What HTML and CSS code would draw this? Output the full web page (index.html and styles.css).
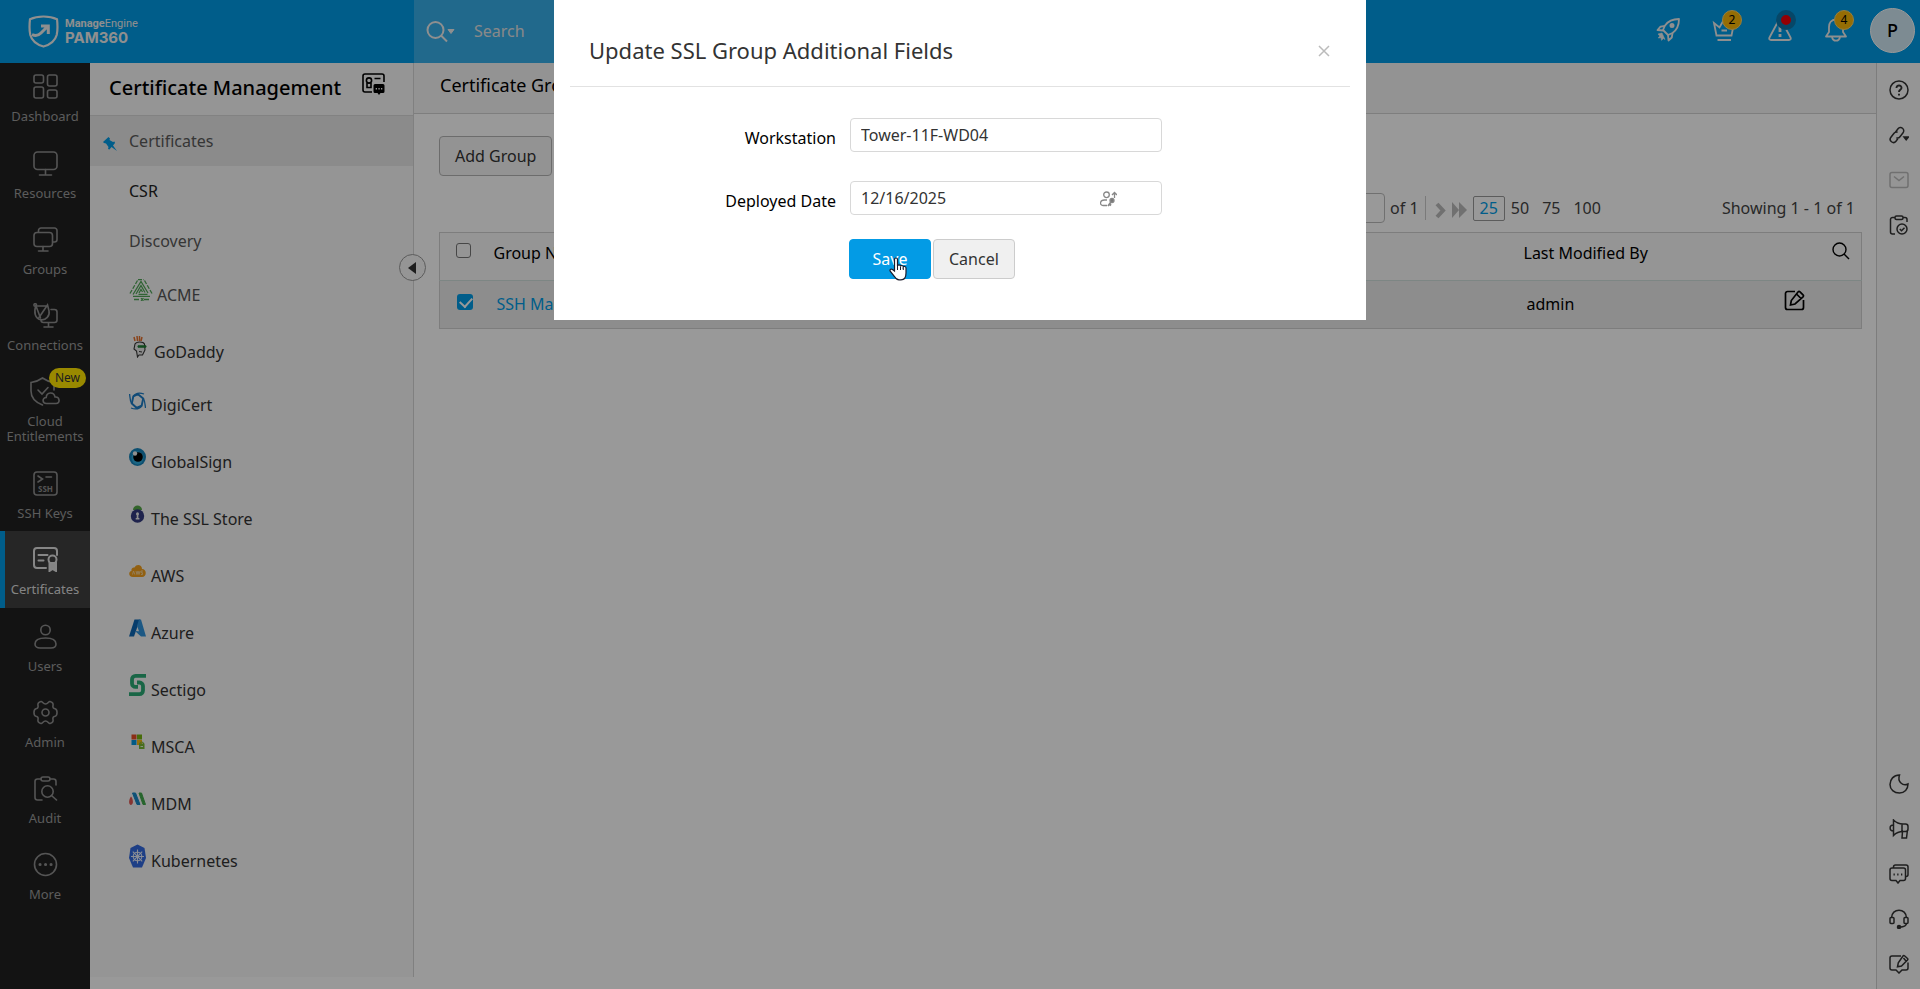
FILE: index.html
```html
<!DOCTYPE html>
<html lang="en">
<head>
<meta charset="utf-8">
<title>PAM360 - Certificate Groups</title>
<link rel="stylesheet" href="styles.css">
</head>
<body>
<div class="app">
  <header class="topbar">
    <a href="#" class="brand">
      <svg class="brand-mark" viewBox="0 0 31 33" fill="none" stroke="currentColor" stroke-width="2.2"><path d="M15.500 1.500C11 1.500 6 2.300 2 4.200c-.7 6-.8 10.800.3 15.800C3.800 25.500 8.500 29.600 15.500 31.500c7-1.900 11.700-6 13.200-11.500 1.100-5 1-9.800.3-15.800C25 2.300 20 1.500 15.500 1.500z"/><path d="M4 19.500c3.500 1.800 6.200 1.300 9-1.500l6.500-6.500M13 11h7.300v8" stroke-width="3"/></svg>
      <span class="brand-text"><span class="brand-top"><b>Manage</b>Engine</span><span class="brand-name">PAM360</span></span>
    </a>
    <div class="search">
      <button class="search-scope" aria-label="Search scope">
        <svg width="29" height="22" viewBox="0 0 29 22" fill="none" stroke="currentColor" stroke-width="2"><circle cx="9.500" cy="9" r="8"/><path d="M15 14.500l6 6"/><path d="M22 8.500h6l-3 4z" fill="currentColor" stroke-width="1"/></svg>
      </button>
      <input class="search-input" type="text" placeholder="Search" aria-label="Search">
    </div>
    <div class="top-actions">
      <button class="top-btn" aria-label="Quick start"><svg width="24" height="24" viewBox="0 0 24 24" fill="none" stroke="currentColor" stroke-width="1.800" stroke-linejoin="round"><path d="M23 1c-6 0-10.500 1.500-14 6.500L7 12l5 5 4.500-2C21.500 11.500 23 7 23 1z"/><path d="M9 8L4.500 8.700 1.500 12 7 12.500M12 17l.5 5.500 3.300-3 .7-4.500"/><circle cx="16" cy="7.500" r="1.600" fill="currentColor"/><path d="M6 15l-4 1 1.800 2-1.500 2 2.700-.3.500 2.600 2-1.800 1.500 1z" fill="currentColor" stroke-width=".6"/></svg></button>
      <button class="top-btn" aria-label="Licences"><svg width="24" height="24" viewBox="0 0 24 24" fill="none" stroke="currentColor" stroke-width="1.800"><path d="M4.500 17.500L2 5l5.500 4.500L12 1.500l4.500 8L22 5l-2.500 12.500zM9.500 12.500h5.500M5.500 22h13.500"/></svg><span class="badge">2</span></button>
      <button class="top-btn" aria-label="Alerts"><svg width="24" height="24" viewBox="0 0 24 24" fill="none" stroke="currentColor" stroke-width="1.800"><path d="M10.300 3L1.500 19.500c-.7 1.500 0 2.500 1.500 2.500h18c1.500 0 2.200-1 1.500-2.500L13.700 3c-.8-1.400-2.600-1.400-3.400 0z"/><path d="M12 8v6M12 16v3" stroke-width="2.800"/></svg><span class="alert-dot"></span></button>
      <button class="top-btn" aria-label="Notifications"><svg width="24" height="24" viewBox="0 0 24 24" fill="none" stroke="currentColor" stroke-width="1.800" stroke-linejoin="round"><path d="M12 1.500c-5 0-7 3.500-7 7.500v5l-3 4.500h20L19 14V9c0-4-2-7.500-7-7.500z"/><path d="M8 19c.5 2.500 2 3.700 4 3.700s3.500-1.200 4-3.700"/></svg><span class="badge">4</span></button>
      <button class="avatar">P</button>
    </div>
  </header>

  <div class="body">
    <nav class="rail" aria-label="Main">
      <a href="#" class="rail-item rail-first"><svg viewBox="0 0 25 25"><rect x="1" y="1" width="9.500" height="8" rx="2"/><rect x="14.500" y="1" width="9.500" height="11" rx="2"/><rect x="1" y="13" width="9.500" height="11" rx="2"/><rect x="14.500" y="16" width="9.500" height="8" rx="2"/></svg><span>Dashboard</span></a>
      <a href="#" class="rail-item"><svg viewBox="0 0 25 25"><rect x="1" y="1" width="23" height="17.500" rx="3.500"/><path d="M12.500 18.500V24M6.500 24h12"/></svg><span>Resources</span></a>
      <a href="#" class="rail-item"><svg viewBox="0 0 25 25"><path d="M5.500 5V3.500A2.500 2.500 0 0 1 8 1h13.500A2.500 2.500 0 0 1 24 3.500v9a2.500 2.500 0 0 1-2.500 2.500H20"/><rect x="1" y="5.500" width="18.500" height="14" rx="3"/><path d="M10 19.500V24M5.500 24h9.500"/></svg><span>Groups</span></a>
      <a href="#" class="rail-item"><svg viewBox="0 0 25 25"><path d="M3 2.500C.5 9 2 16 8 16.800c5 .5 9-4 8-9L14.500 2 6 14.500M2.500 3h12"/><path d="M3 3l4.500 12"/><circle cx="2.200" cy="2" r="1.300"/><path d="M18 6.500h3.500A2.500 2.500 0 0 1 24 9v8a2.500 2.500 0 0 1-2.500 2.500H10.500A2.500 2.500 0 0 1 8 17M15.500 19.500V24M11 24h9"/></svg><span>Connections</span></a>
      <a href="#" class="rail-item rail-cloud"><svg class="cloud-svg" viewBox="0 0 30 30"><path d="M24 13V5.500C19 5 16 3.500 12.500 1 9 3.500 6 5 1 5.500V14c0 7 5 11.500 11.500 14"/><path d="M8 13l4 4 6-6.500"/><path d="M16.500 26.500c-4.500 0-4.500-6-.3-6 .3-6 8-6 8.800-.5 5-.5 5.500 6.500 1 6.500z"/></svg><span>Cloud<br>Entitlements</span><em class="new-tag">New</em></a>
      <a href="#" class="rail-item"><svg viewBox="0 0 25 25"><rect x="1" y="1" width="23" height="23" rx="3"/><path d="M5 5l4.500 3L5 11M13 6h5.500"/><text x="12.500" y="20.500" class="ssh-text">SSH</text></svg><span>SSH Keys</span></a>
      <a href="#" class="rail-item rail-active" aria-current="page"><svg viewBox="0 0 25 25"><path d="M24 8V4a3 3 0 0 0-3-3H4a3 3 0 0 0-3 3v14a3 3 0 0 0 3 3h9M5.500 8h9M5.500 13.500h5"/><circle cx="19.500" cy="12.500" r="4"/><path d="M16.500 16v8l3-2 3.500 2v-8z" fill="currentColor"/></svg><span>Certificates</span></a>
      <a href="#" class="rail-item"><svg viewBox="0 0 25 25"><circle cx="12.500" cy="6" r="4.700"/><path d="M7 24c-3 0-5-1.500-5-4 0-4 4.500-6 10.500-6S23 16 23 20c0 2.500-2 4-5 4z"/></svg><span>Users</span></a>
      <a href="#" class="rail-item"><svg viewBox="0 0 25 25" stroke-linejoin="round"><path d="M8 1.500c1.500-.3 2 2.500 4.500 2.500s3-2.800 4.500-2.500c2.500.5 3.500 2 3 4-.5 2 .5 3 2 3.300 2.700.7 2.700 6.700 0 7.400-1.500.3-2.500 1.300-2 3.300.5 2-.5 3.500-3 4-1.500.3-2-2.500-4.500-2.500s-3 2.800-4.500 2.500c-2.500-.5-3.500-2-3-4 .5-2-.5-3-2-3.300-2.700-.7-2.700-6.700 0-7.400 1.500-.3 2.500-1.300 2-3.300-.5-2 .5-3.500 3-4z"/><circle cx="12.500" cy="12.500" r="3.500"/></svg><span>Admin</span></a>
      <a href="#" class="rail-item"><svg viewBox="0 0 25 25"><path d="M8 3H4.500A2.500 2.500 0 0 0 2 5.500v16A2.500 2.500 0 0 0 4.500 24H9M17 3h3.500A2.500 2.500 0 0 1 23 5.500V9"/><rect x="8" y="1" width="9" height="4" rx="2"/><circle cx="14.500" cy="15.500" r="5.700"/><path d="M18.500 19.500L23.500 24"/></svg><span>Audit</span></a>
      <a href="#" class="rail-item"><svg viewBox="0 0 25 25"><circle cx="12.500" cy="12.500" r="11"/><path d="M7 12.500h.1M12.500 12.500h.1M18 12.500h.1" stroke-width="3"/></svg><span>More</span></a>
    </nav>

    <aside class="panel">
      <div class="panel-head">
        <h2>Certificate Management</h2>
        <button class="icon-btn" aria-label="Request certificate"><svg width="23" height="23" viewBox="0 0 23 23" fill="none" stroke="currentColor" stroke-width="1.600"><path d="M10 19H3a2 2 0 0 1-2-2V3a2 2 0 0 1 2-2h17a2 2 0 0 1 2 2v6"/><circle cx="7" cy="7.500" r="2.600"/><path d="M5 10v4.500h4V10M12.500 5.500h6"/><path d="M13 11h8a1.500 1.500 0 0 1 1.500 1.500v6a1.500 1.500 0 0 1-1.500 1.500h-2.500L17 22l-1.500-2H13a1.500 1.500 0 0 1-1.500-1.500v-6A1.500 1.500 0 0 1 13 11z" fill="currentColor" stroke="none"/><path d="M13.700 15.700h1.300M16.400 15.700h1.300M19 15.700h1.300" stroke="#f8f8f8"/></svg></button>
      </div>
      <a href="#" class="sub sub-active"><svg class="pin" width="14" height="14" viewBox="0 0 14 14"><path d="M5.500 0L7 1.500 6.500 3l3.500 2 1.500-.5L12 6l-2 2.500 4 5.500-5.500-4-2 2.500L5 12l.5-2L3 6.500 1 6 0 5z" fill="#009ce6"/></svg>Certificates</a>
      <a href="#" class="sub sub-dark">CSR</a>
      <a href="#" class="sub">Discovery</a>
      <a href="#" class="vendor vendor-dim"><svg width="24" height="22" viewBox="0 0 24 22" fill="none" stroke="#51a658" stroke-width="1.300"><path d="M9 .7h6M8.500 1.500L.7 15M15.500 1.500L23.300 15" stroke-dasharray="4 1.500"/><path d="M4 17.300h17M4 15.500L12 2.500l7 11.500M7 15l5-8.500 4 7M9.500 15.300h9M10 14l2-3.500 1.500 2.500"/><path d="M5 20.500h5M15 20.500h5M12 19.300l2.500 2.500M14.500 19.300L12 21.800"/></svg>ACME</a>
      <a href="#" class="vendor vendor-gd"><svg width="21" height="22" viewBox="0 0 21 22" fill="none"><path d="M5 1l1 4M8 0l.5 5M10.500 0v5M13 1l-1 4" stroke="#e5702c" stroke-width="1.500"/><path d="M6 8c1-2.500 8-3 9.500 0l.5 6-2.500 5H10l-1.500 2-1-6L5 13z" fill="#e8e8e8" stroke="#333" stroke-width="1.100"/><path d="M9 9.800h8v1.400H9z" fill="#23843a" stroke="#1c7a30"/><path d="M10 15.500l3 .5" stroke="#333"/></svg>GoDaddy</a>
      <a href="#" class="vendor vendor-dc"><svg width="17" height="18" viewBox="0 0 17 18" fill="none" stroke="#1b7cc6"><path d="M9 2.200l5.200 4.300-1.500 7L7.500 15.800 2.800 11.500l1.500-7z" stroke-width="1.900" stroke-linejoin="round"/><path d="M4 4.500C6.500 1 11 .5 15 2M14.500 6.500c1.500 3 1.500 6 2 9.500M13 13.500C10.500 17 6 17.500 2 16M2.500 11.500C1 8.500 1 5.500.6 2" stroke-width="1.300"/></svg>DigiCert</a>
      <a href="#" class="vendor"><svg width="17" height="18" viewBox="0 0 17 18"><ellipse cx="8.500" cy="9" rx="8.500" ry="9" fill="#1784bb"/><ellipse cx="8.500" cy="10" rx="6" ry="6.500" fill="#2ca8dc"/><circle cx="9" cy="9" r="4.800"/><circle cx="6" cy="5.500" r="2.200" fill="#eee"/></svg>GlobalSign</a>
      <a href="#" class="vendor"><svg width="17" height="18" viewBox="0 0 17 18"><path d="M4 5c0-6 9-6 9 0z" fill="#55a948"/><circle cx="8.500" cy="11" r="6.700" fill="#343b80"/><circle cx="8.500" cy="8.700" r="1.500" fill="#eee"/><path d="M7.700 9h1.700v4h1v1.500H6.700V13h1z" fill="#eee"/></svg>The SSL Store</a>
      <a href="#" class="vendor"><svg width="17" height="14" viewBox="0 0 17 14"><path d="M4 13C-.5 13-1 7.500 2.500 7 2 4 4 3 5.500 3.500 7.500-.5 13 .5 13 5c5 0 5 8 0 8z" fill="#f3a11d"/><path d="M3.500 10.500l1-3.500 1.300 3.500M7 7l1 3.500L9 7l1 3.500L11 7M14 7h-2v1.700h1.500v1.800H12" fill="none" stroke="#f7d69c" stroke-width=".9"/></svg>AWS</a>
      <a href="#" class="vendor"><svg width="17" height="18" viewBox="0 0 17 18"><path d="M5.500.5h5.500L5 17.500H0z" fill="#0c66b4"/><path d="M10 .5h2L17 17.500h-5L6 12l4 .2-2-5.500z" fill="#3093dd"/></svg>Azure</a>
      <a href="#" class="vendor"><svg width="17" height="22" viewBox="0 0 17 22" fill="none" stroke="#2bab76" stroke-width="3.800"><path d="M17 1.900H6.500a3.500 3.500 0 0 0-3.500 3.500v4a3.500 3.500 0 0 0 3.500 3.500H9M0 20.100h10.500a3.500 3.500 0 0 0 3.500-3.500V12a3.500 3.500 0 0 0-3.500-3.500H8"/></svg>Sectigo</a>
      <a href="#" class="vendor"><svg width="17" height="16" viewBox="0 0 17 16"><path d="M2.500.5h5v5h-5z" fill="#e84d24"/><path d="M8 .5h5v5H8z" fill="#77b510"/><path d="M2.500 6h5v5h-5z" fill="#0496de"/><path d="M8 6h5v5H8z" fill="#fab710"/><path d="M10 9.500h5.500V15H10z" fill="#79b733"/><circle cx="12.700" cy="10" r="2" fill="none" stroke="#79b733"/><path d="M11.500 12.500h2.500" stroke="#e9f5d5"/></svg>MSCA</a>
      <a href="#" class="vendor"><svg width="17" height="14" viewBox="0 0 17 14"><path d="M2 4.500c2 2 3 8 0 8.500-3-.5-2-6 0-8.500z" fill="#e05752"/><path d="M3.500 1h3l4.500 11.500H8z" fill="#1787c6" stroke="#1787c6" stroke-linejoin="round"/><path d="M10 1h2.500l4 11.500H14z" fill="#42a84b" stroke="#42a84b" stroke-linejoin="round"/></svg>MDM</a>
      <a href="#" class="vendor"><svg width="17" height="24" viewBox="0 0 17 24"><path d="M8.500.5L15.500 4 17 14l-4 9.500H4L0 14 1.500 4z" fill="#3269df"/><g fill="none" stroke="#e4eaf8" stroke-width="1.100"><circle cx="8.500" cy="12.500" r="4.300"/><path d="M8.500 5.500v14M2 12.500h13M3.800 7.700l9.400 9.600M13.200 7.700l-9.400 9.600"/></g></svg>Kubernetes</a>
      <button class="collapse" aria-label="Collapse panel"><svg width="8" height="12" viewBox="0 0 8 12"><path d="M8 0v12L0 6z" fill="#333"/></svg></button>
    </aside>

    <main class="main">
      <div class="page-head"><h1>Certificate Groups</h1></div>
      <div class="content">
        <div><button class="btn">Add Group</button></div>
        <div class="pager">
          <div class="pager-nav">
            <input class="page-no" type="text" value="1" aria-label="Page">
            <span class="page-of">of 1</span>
            <button class="step step-next" aria-label="Next page"><svg width="11" height="17" viewBox="0 0 11 17" fill="none" stroke="currentColor" stroke-width="4"><path d="M2 2l6 6.500L2 15"/></svg></button>
            <button class="step" aria-label="Last page"><svg width="15" height="16" viewBox="0 0 15 16" fill="currentColor"><path d="M0 0l7 8-7 8zM7 0l8 8-8 8z"/></svg></button>
            <button class="size size-on">25</button><button class="size">50</button><button class="size">75</button><button class="size">100</button>
          </div>
          <span>Showing 1 - 1 of 1</span>
        </div>
        <table class="grid">
          <colgroup><col class="c-check"><col><col class="c-by"><col class="c-edit"><col class="c-find"></colgroup>
          <thead><tr>
            <th><input type="checkbox" class="tick" aria-label="Select all"></th>
            <th>Group Name</th><th>Last Modified By</th><th></th>
            <th><button class="icon-btn" aria-label="Search table"><svg width="18" height="18" viewBox="0 0 18 18" fill="none" stroke="currentColor" stroke-width="1.400"><circle cx="7.500" cy="7.500" r="6.500"/><path d="M12 12l5 5"/></svg></button></th>
          </tr></thead>
          <tbody><tr>
            <td><input type="checkbox" class="tick tick-row" checked aria-label="Select SSH Machines"></td>
            <td><a href="#" class="name">SSH Machines</a></td><td class="by">admin</td>
            <td><button class="icon-btn" aria-label="Edit"><svg width="21" height="21" viewBox="0 0 21 21" fill="none" stroke="currentColor" stroke-width="1.700"><path d="M11 1.500H3.500a2 2 0 0 0-2 2v14a2 2 0 0 0 2 2h14a2 2 0 0 0 2-2V10"/><path d="M16 1.800l3 3c.7.700.7 1.300 0 2l-8 7.200-4.500 1 .8-4.500 6.700-8.500c.7-.8 1.300-.8 2-.2zM13 4.500l4 4"/></svg></button></td><td></td>
          </tr></tbody>
        </table>
      </div>
    </main>

    <nav class="tools" aria-label="Tools">
      <button aria-label="Help"><svg viewBox="0 0 20 20"><circle cx="10" cy="10" r="9"/><path d="M7.500 8c0-3.500 5.200-3.200 5 0-.2 2-2.500 1.800-2.500 4M10 13.700v1.800" stroke-width="1.900"/></svg></button>
      <button aria-label="Links"><svg viewBox="0 0 20 20"><g transform="rotate(38 8 10)"><path d="M5 8.500V4.500a3.200 3.200 0 0 1 6.400 0v5a3.200 3.200 0 0 1-2.200 3"/><path d="M11 12.500v3a3.200 3.200 0 0 1-6.400 0v-5a3.200 3.200 0 0 1 2.200-3"/></g><path d="M15 12h4.400l-2.200 2.800z" fill="currentColor"/></svg></button>
      <button class="muted" aria-label="Mail"><svg viewBox="0 0 20 20"><rect x="1" y="2.500" width="18" height="15" rx="2"/><path d="M5 6.500l5 4 5-4"/></svg></button>
      <button class="tool-clip" aria-label="Tasks"><svg viewBox="0 0 20 20"><path d="M6 2.500H3.500a2 2 0 0 0-2 2v12.500a2 2 0 0 0 2 2H6M14 2.500h2a2 2 0 0 1 2 2V7"/><rect x="6" y="1" width="8" height="3.500" rx="1.500"/><circle cx="13" cy="14" r="5"/><path d="M10.800 14l1.700 1.700 3-3"/></svg></button>
      <button aria-label="Theme"><svg viewBox="0 0 20 20"><path d="M10.500 1C4.500 1 1 5.500 1 10.500S5 19 10.500 19c5 0 8.500-3.500 8.500-9-5 2.500-11-2-8.500-9z"/></svg></button>
      <button aria-label="Announcements"><svg viewBox="0 0 20 20"><path d="M4.500 1v15.500c3-3 6-4 9.500-4h2.500c1.500 0 2.500-1 2.500-2.500V7.500C19 6 18 5 16.500 5H14c-3.500 0-6.500-1-9.500-4zM4.500 6C0 6 0 12 4.500 12M13 5v7.500M13.500 12.500l-.5 6.500h4.500l1-8"/></svg></button>
      <button aria-label="Chat"><svg viewBox="0 0 20 20"><path d="M4.500 4V3a2 2 0 0 1 2-2H17a2 2 0 0 1 2 2v7.500a2 2 0 0 1-2 2"/><path d="M3 4h11.500a2 2 0 0 1 2 2v8.500a2 2 0 0 1-2 2H11L9 19l-2-2.500H3a2 2 0 0 1-2-2V6a2 2 0 0 1 2-2z"/><path d="M4.500 10.500h1.300M8.200 10.500h1.300M12 10.500h1.300" stroke-width="1.800"/></svg></button>
      <button aria-label="Support"><svg viewBox="0 0 20 20"><path d="M2.500 9C2.500-1.500 17.500-1.500 17.500 9M17.500 14c0 3-3 4-7 4.200"/><rect x="1" y="8.500" width="4" height="6" rx="1"/><rect x="15" y="8.500" width="4" height="6" rx="1"/><circle cx="10" cy="18" r="1.500" fill="currentColor"/></svg></button>
      <button aria-label="Feedback"><svg viewBox="0 0 20 20"><path d="M12 2H3a2 2 0 0 0-2 2v10a2 2 0 0 0 2 2h4l3 3 3-3h4a2 2 0 0 0 2-2V8.500"/><path d="M15.500 1.800l3 2.700c.5.500.5 1 0 1.500L12.500 12l-4 .8.800-4L14 2c.5-.7 1-.7 1.500-.2zM14.500 4l2.500 3"/></svg></button>
    </nav>
  </div>
</div>

<div class="overlay">
  <section class="modal" role="dialog" aria-labelledby="dlg-title">
    <div class="modal-head">
      <h2 id="dlg-title">Update SSL Group Additional Fields</h2>
      <button class="close" aria-label="Close"><svg width="12" height="12" viewBox="0 0 12 12" fill="none" stroke="currentColor" stroke-width="1.500"><path d="M1 1l10 10M11 1L1 11"/></svg></button>
    </div>
    <form class="form">
      <label for="ws">Workstation</label>
      <input id="ws" class="field" type="text" value="Tower-11F-WD04">
      <label for="dd">Deployed Date</label>
      <div class="field-wrap">
        <input id="dd" class="field" type="text" value="12/16/2025">
        <svg class="fill-icon" width="17" height="16" viewBox="0 0 17 16" fill="none" stroke="#888" stroke-width="1.300"><circle cx="6.500" cy="3.800" r="2.800"/><path d="M7 9H4.500C-.5 9-.5 14.500 3 14.500h4M14.500 7V2M12 4l2.500-2.500L17 4"/><circle cx="12" cy="9.500" r="2" fill="#777"/><path d="M11 11l-3 4M9.500 13l1.500 1.500" stroke-width="1.800"/></svg>
      </div>
      <div class="form-actions">
        <button type="button" class="btn btn-save">Save<svg class="pointer" width="18" height="24" viewBox="0 0 18 24"><path d="M5.500 14V2.500c0-2 3-2 3 0V9c.3-1.700 3-1.500 3 .3.500-1.300 2.800-1 2.800.7.600-1 2.700-.7 2.700 1v5c0 3.500-1.500 6.800-5 6.800H10c-2.500 0-3.500-1.500-4.500-3.300L1.200 14.200c-.8-1.700 1-2.700 2.300-1.700z" fill="#fff" stroke="#1c1c2c" stroke-width="1.200"/><path d="M8.500 9v4M11.500 9.500V13M14.300 10.500V13" stroke="#1c1c2c"/></svg></button>
        <button type="button" class="btn">Cancel</button>
      </div>
    </form>
  </section>
</div>
</body>
</html>
```

FILE: styles.css
```css
* { box-sizing: border-box; }
body {
  margin: 0;
  font: 16px/24px "Noto Sans", "Open Sans", sans-serif;
  color: #000;
  background: #fff;
}
a { color: inherit; text-decoration: none; }
button, input { font: inherit; color: inherit; }
button { background: none; border: 0; padding: 0; }
h1, h2 { margin: 0; font-weight: 400; }
svg { display: block; flex: none; }

.app { min-height: 100vh; display: flex; flex-direction: column; }

/* Top bar */
.topbar { height: 63px; display: flex; background: #009ce6; color: #fff; }
.brand { width: 414px; padding: 0 28px; display: flex; align-items: center; gap: 6px; color: #eee; }
.brand-mark { width: 31px; height: 33px; }
.brand-text { display: flex; flex-direction: column; font-family: Roboto, sans-serif; }
.brand-top { font-size: 11px; line-height: 12px; }
.brand-name { font: 700 15px/16px Inter, sans-serif; }
.search { width: 520px; display: flex; align-items: center; gap: 19px; padding: 0 12px; background: #37afea; }
.search-input { flex: 1; min-width: 0; background: none; border: 0; padding: 0 0 2px; }
.search-input::placeholder { color: #e4e4e4; opacity: 1; }
.search-scope { color: #eee; }
.top-actions { margin-left: auto; padding: 0 5px 3px 0; display: flex; align-items: center; gap: 32px; }
.top-btn { position: relative; color: #eee; }
.badge {
  position: absolute; left: 10px; top: -8px; width: 20px; height: 20px;
  border-radius: 50%; background: #f9b608; border: 1px solid #f7d36b; color: #000; font-size: 12px; line-height: 18px;
}
.alert-dot {
  position: absolute; left: 8px; top: -8px; width: 20px; height: 20px;
  border-radius: 50%; border: 5px solid #0b77ad; background: #f50008;
}
.avatar {
  width: 45px; height: 45px; margin-left: -10px; border-radius: 50%;
  background: #d1e8f3; border: 1px solid #fff; color: #000; font-size: 18px; font-weight: 500;
}

.body { flex: 1; display: flex; }

/* Navigation rail */
.rail { width: 90px; background: #212121; color: #999; font-size: 13px; line-height: 14px; text-align: center; }
.rail-item { position: relative; height: 76px; padding-top: 16px; display: flex; flex-direction: column; align-items: center; gap: 10px; }
.rail-item svg { width: 25px; height: 25px; fill: none; stroke: #8e8e8e; stroke-width: 1.600; stroke-linecap: round; }
.rail-first { height: 72px; padding-top: 11px; }
.rail-cloud { height: 92px; padding-top: 14px; gap: 7px; line-height: 15px; }
.rail-item .cloud-svg { width: 30px; height: 30px; }
.rail-active { height: 77px; background: #404040; color: #ddd; border-left: 5px solid #009ce6; padding-right: 5px; }
.rail-active svg { stroke: #e0e0e0; stroke-width: 2; }
.ssh-text { font: 700 8px "Noto Sans", sans-serif; fill: #8e8e8e; stroke: none; text-anchor: middle; }
.new-tag {
  position: absolute; right: 4px; top: 5px; padding: 0 6px; border-radius: 10px;
  background: #ffe500; color: #333; font-style: normal; font-size: 12px; line-height: 20px;
}

/* Certificate panel */
.panel { position: relative; width: 324px; margin-bottom: 12px; background: #f8f8f8; border-right: 1px solid #d5d5d5; color: #333; }
.panel-head { height: 53px; padding: 0 28px 2px 19px; display: flex; align-items: center; justify-content: space-between; border-bottom: 1px solid #d9d9d9; color: #000; }
.panel-head h2 { font-size: 20px; font-weight: 500; }
.panel-head .icon-btn { padding-bottom: 8px; }
.icon-btn { color: #000; vertical-align: middle; }
.sub { position: relative; display: flex; align-items: center; height: 50px; padding-left: 39px; color: #5a5a5a; }
.sub-active { background: #e8e8e8; }
.sub-dark { color: #222; }
.pin { position: absolute; left: 13px; top: 21px; }
.vendor { display: flex; align-items: center; gap: 5px; height: 57px; padding-left: 39px; }
.vendor svg { margin-bottom: 9px; }
.vendor-dim { gap: 4px; color: #555; }
.vendor-gd { gap: 4px; }
.vendor-dc { height: 53px; padding-bottom: 3px; }
.collapse {
  position: absolute; right: -13px; top: 191px; width: 27px; height: 27px; padding-right: 2px;
  border-radius: 50%; border: 1px solid #999; background: #f8f8f8;
  display: flex; align-items: center; justify-content: center;
}

/* Main area */
.main { flex: 1; min-width: 0; }
.page-head { height: 51px; padding: 10px 26px; background: #f5f5f5; border-bottom: 1px solid #d2d2d2; }
.page-head h1 { font-size: 18px; }
.content { padding: 22px 14px 0 25px; }
.btn {
  height: 40px; padding: 0 15px; border: 1px solid #ccc; border-radius: 4px;
  background: #f0f0f0; color: #333;
}
.content .btn { background: #f5f5f5; border-color: #b5b5b5; }
.pager { display: flex; justify-content: flex-end; align-items: center; gap: 114px; height: 32px; margin: 16px 7px 8px 0; color: #444; }
.pager-nav { display: flex; align-items: center; }
.page-no { width: 50px; height: 30px; padding: 0 8px; border: 1px solid #bbb; border-radius: 4px; background: none; }
.page-of { margin-left: 5px; padding-right: 6px; border-right: 1px solid #ccc; }
.step { color: #bbb; padding-top: 4px; margin-right: 6px; }
.step-next { margin-left: 9px; }
.size { height: 25px; padding: 0 6px 0 5px; line-height: 22px; border: 1px solid transparent; }
.size-on { padding: 0 6px; color: #009ce6; border-color: #999; border-radius: 2px; }

.grid { width: 100%; border-collapse: collapse; table-layout: fixed; border: 1px solid #d0d0d0; }
.grid th, .grid td { height: 48px; padding: 0 0 2px; text-align: left; font-weight: 400; }
.grid th { padding-bottom: 8px; }
.grid thead { background: #f8f8f8; }
.grid tbody tr { background: #ebebeb; border-top: 1px solid #d0e0dc; }
.grid td .icon-btn { padding-bottom: 6px; }
.grid th .icon-btn { padding-bottom: 5px; }
.c-check { width: 54px; }
.c-by { width: 260px; }
.c-edit { width: 48px; }
.c-find { width: 30px; }
.tick {
  appearance: none; display: block; width: 15px; height: 15px; margin: 0 0 5px 16px;
  border: 1px solid #777; border-radius: 3px;
}
.tick-row { width: 16px; height: 16px; margin: 0 0 3px 17px; background: #009ce6; border: 0; }
.tick-row:checked::after {
  content: ""; display: block; width: 6px; height: 10px; margin: 1px 0 0 5px;
  border: solid #fff; border-width: 0 2px 2px 0; transform: rotate(42deg);
}
.name { padding-left: 3px; color: #009ce6; }
.grid .by { padding-left: 3px; }

/* Tool strip */
.tools { width: 44px; padding: 17px 0 15px; display: flex; flex-direction: column; align-items: center; gap: 25px; border-left: 1px solid #d0d0d0; background: #f8f8f8; }
.tools button { color: #333; }
.tools svg { width: 20px; height: 20px; fill: none; stroke: currentColor; stroke-width: 1.500; }
.tools .muted { color: #bbb; }
.tools .tool-clip { margin-bottom: auto; }

/* Dialog */
.overlay { position: fixed; inset: 0; display: flex; justify-content: center; align-items: flex-start; background: rgba(0, 0, 0, .4); }
.modal { width: 812px; max-width: 100%; padding: 0 16px 41px; background: #fff; }
.modal-head { height: 87px; padding: 15px 20px 0 19px; display: flex; align-items: center; justify-content: space-between; border-bottom: 1px solid #e2e2e2; color: #333; }
.modal-head h2 { font-size: 22px; line-height: 32px; padding-bottom: 2px; }
.close { color: #bbb; }
.form { padding-top: 31px; display: grid; grid-template-columns: 266px 312px; column-gap: 14px; row-gap: 29px; align-items: center; }
.form label { text-align: right; padding-top: 5px; }
.field { width: 100%; height: 34px; padding: 0 10px; border: 1px solid #d8d8d8; border-radius: 4px; color: #333; background: #fff; }
.field-wrap { position: relative; height: 34px; }
.fill-icon { position: absolute; right: 45px; top: 10px; }
.form-actions { grid-column: 2; display: flex; gap: 2px; margin: -5px 0 0 -1px; }
.btn-save { position: relative; width: 82px; background: #039be5; border-color: #039be5; color: #fff; }
.pointer { position: absolute; left: 39px; top: 17px; }
```
